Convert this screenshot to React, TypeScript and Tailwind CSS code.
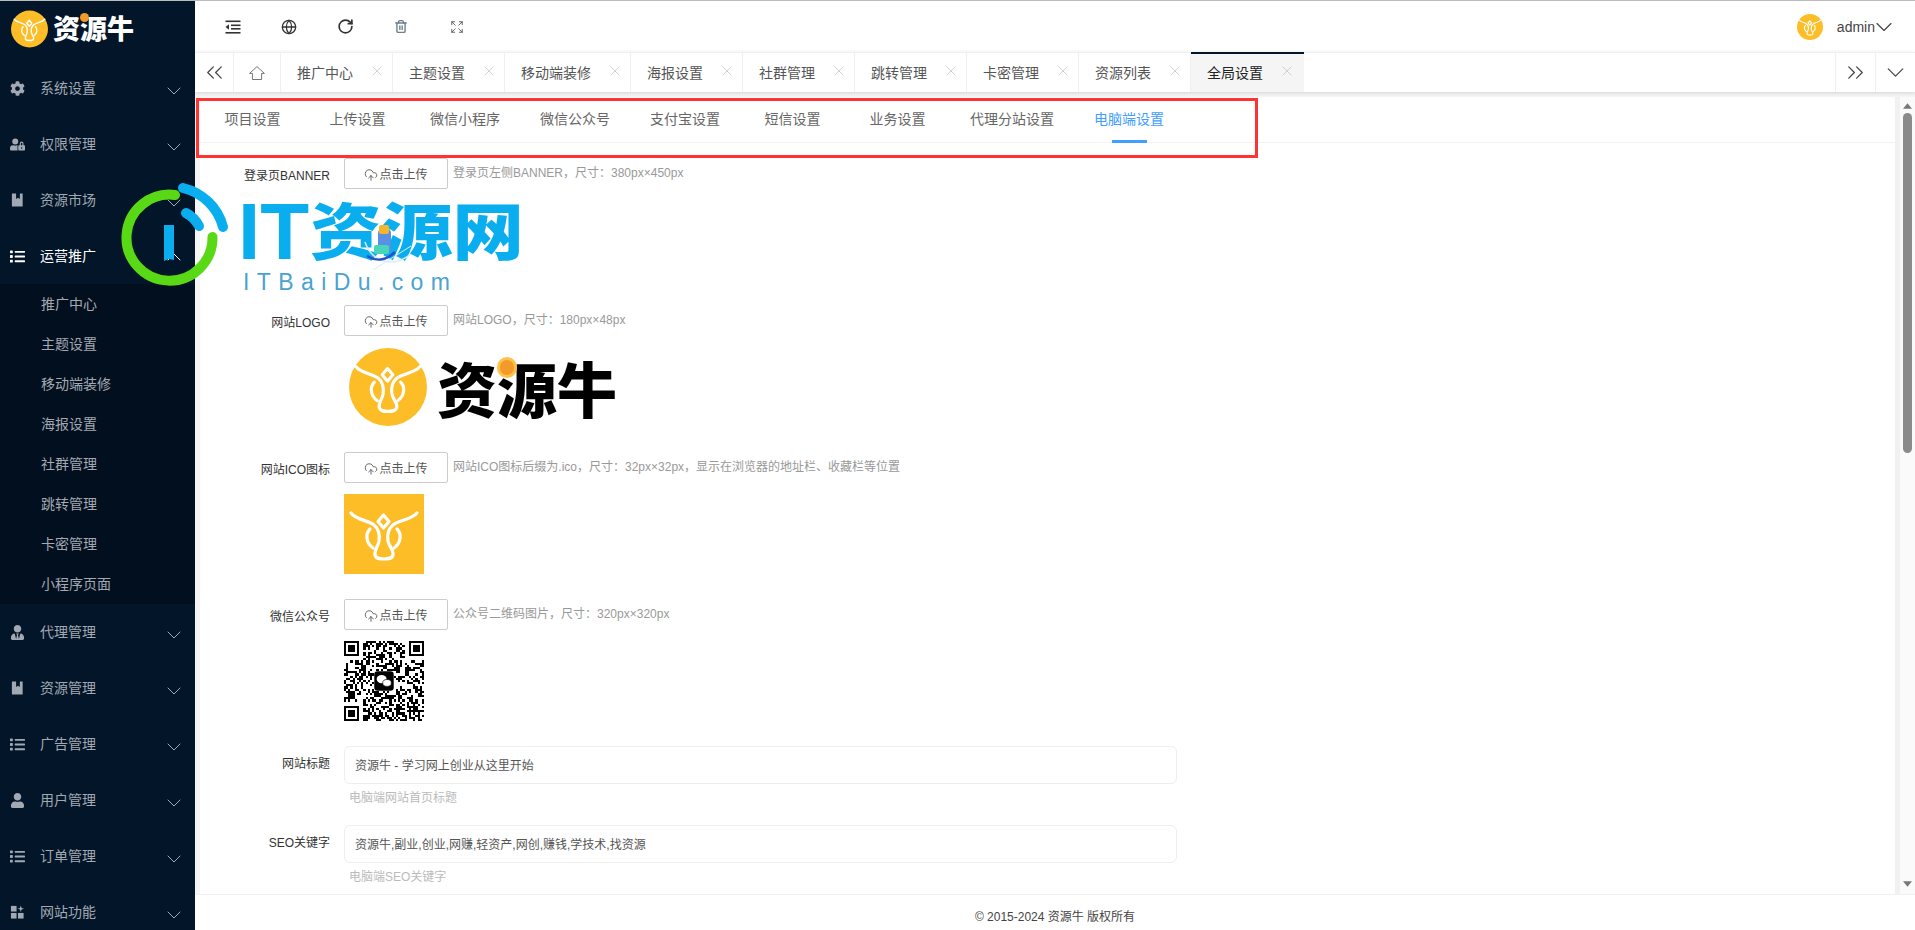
import React from "react";
import { ChevronDown, ChevronUp, ChevronsLeft, ChevronsRight, CloudUpload, Expand, Globe, RotateCw, Trash2, X } from "lucide-react";
import { FaCog, FaList, FaUser, FaUserLock, FaUserTie } from "react-icons/fa";

const FONT = '"Liberation Sans", "Noto Sans CJK SC", sans-serif';

function Bull({ stroke = "#fff", w = 2.4 }: { stroke?: string; w?: number }) {
  return (
    <g fill="none" stroke={stroke} strokeWidth={w} strokeLinecap="round" strokeLinejoin="round">
      <path d="M7 19C12 26 24 26 30 31C35 35 36 40 35 47C34 53 30 56 31 61C32 65 36 65 40 65C44 65 48 65 49 61C50 56 45 53 44 47C43 40 44 35 49 31C55 26 67 26 73 19" />
      <path d="M26 35C21 40 22 49 29 54" />
      <path d="M53 35C58 40 57 49 50 54" />
      <path d="M39.5 21L45 27.5L39.5 34L34 27.5Z" />
    </g>
  );
}

function BookIcon() {
  return (
    <svg viewBox="0 0 16 16" className="w-[15px] h-[16px]" fill="currentColor">
      <path d="M2 1H6.5V7L8.5 5.5L10.5 7V1H13.5V15H2Z" />
    </svg>
  );
}

function AppsIcon() {
  return (
    <svg viewBox="0 0 16 16" className="w-[15px] h-[16px]" fill="currentColor">
      <rect x="1" y="1.5" width="6" height="6" />
      <rect x="1" y="9" width="6" height="6" />
      <rect x="8.5" y="9" width="6" height="6" />
      <path d="M11.5 1L12.4 3.6L15 4.5L12.4 5.4L11.5 8L10.6 5.4L8 4.5L10.6 3.6Z" />
    </svg>
  );
}

function OutdentIcon() {
  return (
    <svg viewBox="0 0 16 16" className="w-[16px] h-[16px]" fill="#333">
      <rect x="0.5" y="1.5" width="15" height="1.6" />
      <rect x="6" y="5.5" width="9.5" height="1.6" />
      <rect x="6" y="9" width="9.5" height="1.6" />
      <rect x="0.5" y="13" width="15" height="1.6" />
      <path d="M4 5.2V10.8L0.5 8Z" />
    </svg>
  );
}

function HomeIcon() {
  return (
    <svg viewBox="0 0 16 14" className="w-[16px] h-[14px]" fill="none" stroke="#666" strokeWidth="0.9" strokeLinejoin="round">
      <path d="M0.6 7.4L8 0.6L15.4 7.4H12.6V13.5H3.4V7.4Z" />
    </svg>
  );
}

const ICON = "w-[15px] h-[15px]";

const topMenu = [
  { label: "系统设置", icon: <FaCog className={ICON} /> },
  { label: "权限管理", icon: <FaUserLock className={ICON} /> },
  { label: "资源市场", icon: <BookIcon /> },
];
const subMenu = ["推广中心", "主题设置", "移动端装修", "海报设置", "社群管理", "跳转管理", "卡密管理", "小程序页面"];
const bottomMenu = [
  { label: "代理管理", icon: <FaUserTie className={ICON} /> },
  { label: "资源管理", icon: <BookIcon /> },
  { label: "广告管理", icon: <FaList className={ICON} /> },
  { label: "用户管理", icon: <FaUser className={ICON} /> },
  { label: "订单管理", icon: <FaList className={ICON} /> },
  { label: "网站功能", icon: <AppsIcon /> },
];

function MenuItem({ label, icon, open }: { label: string; icon: React.ReactNode; open?: boolean }) {
  return (
    <div className={`flex items-center h-14 shrink-0 pl-[10px] pr-[9px] text-sm ${open ? "text-white" : "text-[#a3a9b2]"}`}>
      <span className="w-[15px] mr-[15px] flex justify-center">{icon}</span>
      <span>{label}</span>
      {open ? (
        <ChevronUp className="ml-auto w-[24px] h-[24px] mt-[2px] text-white" strokeWidth={1} />
      ) : (
        <ChevronDown className="ml-auto w-[24px] h-[24px] mt-[5px] text-[#a3a9b2]" strokeWidth={1} />
      )}
    </div>
  );
}

function Sidebar() {
  return (
    <aside className="w-[195px] shrink-0 bg-[#021529] flex flex-col overflow-hidden">
      <div className="h-[59px] shrink-0 flex items-center pl-[11px] pb-[4px]">
        <svg viewBox="0 0 80 80" className="w-[37px] h-[38px] shrink-0">
          <circle cx="40" cy="40" r="40" fill="#fdbd27" />
          <Bull w={3} />
        </svg>
        <div className="relative ml-[5px]">
          <span className="text-[27px] leading-[34px] font-black text-white whitespace-nowrap" style={{ fontFamily: '"Noto Sans CJK SC", sans-serif' }}>资源牛</span>
          <span className="absolute left-[27px] top-[2px] w-[9px] h-[9px] rounded-full bg-[#f39a2b]" />
        </div>
      </div>
      {topMenu.map((m) => (
        <MenuItem key={m.label} {...m} />
      ))}
      <MenuItem label="运营推广" icon={<FaList className={ICON} />} open />
      <div className="bg-[#020f1e] shrink-0">
        {subMenu.map((s) => (
          <div key={s} className="h-10 flex items-center pl-[41px] text-sm text-[#a3a9b2]">{s}</div>
        ))}
      </div>
      {bottomMenu.map((m) => (
        <MenuItem key={m.label} {...m} />
      ))}
    </aside>
  );
}

function Header() {
  return (
    <div className="h-[51px] shrink-0 flex items-center pl-[10px] pr-[17px] bg-white">
      <span className="w-14 flex justify-center"><OutdentIcon /></span>
      <span className="w-14 flex justify-center"><Globe className="w-[16px] h-[16px] text-[#333]" strokeWidth={1.9} /></span>
      <span className="w-14 flex justify-center"><RotateCw className="w-[17px] h-[17px] text-[#333]" strokeWidth={2.4} /></span>
      <span className="w-14 flex justify-center"><Trash2 className="w-[14px] h-[15px] text-[#6f7f8c]" strokeWidth={2.4} /></span>
      <span className="w-14 flex justify-center"><Expand className="w-[14px] h-[14px] text-[#555]" strokeWidth={1.5} /></span>
      <svg viewBox="0 0 80 80" className="ml-auto w-[26px] h-[26px]">
        <circle cx="40" cy="40" r="40" fill="#fdbd27" />
        <Bull w={3.4} />
      </svg>
      <span className="ml-[14px] text-sm text-[#444]">admin</span>
      <ChevronDown className="-ml-[5px] w-[28px] h-[28px] text-[#444]" strokeWidth={1} />
    </div>
  );
}

const tabs = ["推广中心", "主题设置", "移动端装修", "海报设置", "社群管理", "跳转管理", "卡密管理", "资源列表"];

function TabBar() {
  return (
    <div className="h-[40px] shrink-0 flex bg-white border-t border-[#f0f0f0] shadow-[0_1px_4px_rgba(0,0,0,0.14)] relative text-sm">
      <div className="w-[39px] flex items-center justify-center border-r border-[#f0f0f0]">
        <ChevronsLeft className="w-[27px] h-[27px] text-[#444]" strokeWidth={1.1} />
      </div>
      <div className="w-[47px] flex items-center justify-center border-r border-[#f0f0f0]">
        <HomeIcon />
      </div>
      {tabs.map((t) => (
        <div key={t} className="flex items-center pl-4 pr-[7px] border-r border-[#f0f0f0] text-[#555]">
          <span>{t}</span>
          <X className="ml-[16px] w-[16px] h-[16px] mb-[4px] text-[#bbb]" strokeWidth={1} />
        </div>
      ))}
      <div className="flex items-center pl-4 pr-[9px] bg-[#f5f5f5] border-t-2 border-[#021529] text-[#222] -mt-px">
        <span>全局设置</span>
        <X className="ml-[16px] w-[16px] h-[16px] mb-[4px] text-[#bbb]" strokeWidth={1} />
      </div>
      <div className="ml-auto w-[40px] flex items-center justify-center border-l border-[#f0f0f0]">
        <ChevronsRight className="w-[27px] h-[27px] text-[#444]" strokeWidth={1.1} />
      </div>
      <div className="w-[40px] flex items-center justify-center border-l border-[#f0f0f0]">
        <ChevronDown className="w-[29px] h-[29px] text-[#444]" strokeWidth={1} />
      </div>
    </div>
  );
}

const settings = ["项目设置", "上传设置", "微信小程序", "微信公众号", "支付宝设置", "短信设置", "业务设置", "代理分站设置", "电脑端设置"];

function Settings() {
  return (
    <div className="h-[46px] shrink-0 flex border-b border-[#f2f2f2] text-sm">
      {settings.map((s, i) => {
        const active = i === settings.length - 1;
        return (
          <div key={s} className={`relative min-w-[105px] px-5 pt-[13px] text-center leading-[18px] ${active ? "text-[#409eff]" : "text-[#666]"}`}>
            {s}
            {active && <span className="absolute left-[38px] bottom-[-1px] w-[35px] h-[3px] bg-[#409eff]" />}
          </div>
        );
      })}
    </div>
  );
}

function Label({ children }: { children: React.ReactNode }) {
  return <div className="w-[130px] mr-[14px] shrink-0 pt-[10px] text-right text-xs leading-4 text-[#333]">{children}</div>;
}

function UploadRow({ label, hint, children }: { label: string; hint: string; children?: React.ReactNode }) {
  return (
    <div className="flex mb-[25px]">
      <Label>{label}</Label>
      <div>
        <div className="flex items-start">
          <div className="w-[104px] h-[31px] border border-[#ccc] rounded-[2px] flex items-center justify-center pt-[2px] text-xs text-[#555]">
            <CloudUpload className="w-[14px] h-[14px] mr-[1px] text-[#555]" strokeWidth={1.5} />
            点击上传
          </div>
          <div className="ml-[5px] mt-[7px] text-xs leading-4 text-[#999] whitespace-nowrap">{hint}</div>
        </div>
        <div className="h-[80px] mt-[11px]">{children}</div>
      </div>
    </div>
  );
}

function InputRow({ label, value, hint }: { label: string; value: string; hint: string }) {
  return (
    <div className="flex mb-[19px]">
      <Label>{label}</Label>
      <div>
        <div className="w-[833px] h-[38px] border border-[#eee] rounded-[6px] flex items-center pl-[10px] pt-[2px] text-xs text-[#555]">{value}</div>
        <div className="mt-[6px] pl-[5px] text-xs leading-4 text-[#bbb]">{hint}</div>
      </div>
    </div>
  );
}

function BigLogo() {
  return (
    <div className="flex items-center h-[80px] pl-[5px]">
      <svg viewBox="0 0 80 80" className="w-[78px] h-[78px] shrink-0">
        <circle cx="40" cy="40" r="40" fill="#fdbd27" />
        <Bull w={3.2} />
      </svg>
      <div className="relative ml-[10px]">
        <span className="text-[60px] leading-[80px] font-black text-black whitespace-nowrap" style={{ fontFamily: '"Noto Sans CJK SC", sans-serif' }}>资源牛</span>
        <span className="absolute left-[60px] top-[10px] w-[20px] h-[21px] rounded-full bg-[#f39a2b] border-[3px] border-[#fbc34a]" />
      </div>
    </div>
  );
}

function IcoImage() {
  return (
    <svg viewBox="0 0 80 80" className="w-[80px] h-[80px]">
      <rect width="80" height="80" fill="#fdbd27" />
      <Bull w={3.2} />
    </svg>
  );
}

function qrPath() {
  const n = 37;
  let d = "";
  let s = 20240;
  const inFinder = (x: number, y: number) =>
    (x < 9 && y < 9) || (x > n - 10 && y < 9) || (x < 9 && y > n - 10);
  const inCentre = (x: number, y: number) => x > 13 && x < 23 && y > 13 && y < 23;
  for (let y = 0; y < n; y++) {
    for (let x = 0; x < n; x++) {
      s = (s * 1103515245 + 12345) & 0x7fffffff;
      if (inFinder(x, y) || inCentre(x, y)) continue;
      if ((s >> 16) % 2 === 0) d += `M${x} ${y}h1v1h-1z`;
    }
  }
  return d;
}

function Finder({ x, y }: { x: number; y: number }) {
  return (
    <g>
      <rect x={x} y={y} width="7" height="7" fill="#000" />
      <rect x={x + 1} y={y + 1} width="5" height="5" fill="#fff" />
      <rect x={x + 2} y={y + 2} width="3" height="3" fill="#000" />
    </g>
  );
}

function QrCode() {
  return (
    <svg viewBox="0 0 37 37" className="w-[80px] h-[80px]" shapeRendering="crispEdges">
      <path d={qrPath()} fill="#000" />
      <Finder x={0} y={0} />
      <Finder x={30} y={0} />
      <Finder x={0} y={30} />
      <g shapeRendering="auto">
        <rect x="14" y="14" width="9" height="9" rx="1.5" fill="#000" />
        <ellipse cx="17.4" cy="17.6" rx="2.3" ry="1.9" fill="#fff" />
        <ellipse cx="19.9" cy="19.4" rx="2" ry="1.6" fill="#fff" stroke="#000" strokeWidth="0.3" />
      </g>
    </svg>
  );
}

function Watermark() {
  return (
    <div className="absolute left-[115px] top-[180px] w-[420px] h-[115px] pointer-events-none">
      <svg viewBox="0 0 420 115" className="absolute inset-0 w-[420px] h-[115px]">
        <g fill="none" strokeLinecap="round" strokeWidth="10">
          <path d="M60 15A43 43 0 1 0 97.5 57" stroke="#59d916" />
          <path d="M68 8A54 54 0 0 1 108 47" stroke="#0aaeef" />
          <path d="M71 33A32 32 0 0 1 84 46" stroke="#0aaeef" strokeWidth="10" />
        </g>
        <path d="M49 45H59V80L54 79L49 81Z" fill="#0aaeef" />
      </svg>
      <div className="absolute left-[123px] top-[12px] flex items-center h-[80px] text-[#0aaeef] whitespace-nowrap">
        <span className="text-[80px] leading-[80px] font-bold" style={{ fontFamily: '"Liberation Sans", sans-serif' }}>IT</span>
        <span className="inline-block origin-left scale-x-[1.15] text-[62px] leading-[80px] font-black mb-[8px] ml-[1px]" style={{ fontFamily: '"Noto Sans CJK SC", sans-serif' }}>资源网</span>
      </div>
      <div className="absolute left-[128px] top-[89px] text-[23px] leading-[26px] text-[#4aa3cf] whitespace-nowrap tracking-[7.4px]" style={{ fontFamily: '"Liberation Sans", sans-serif' }}>ITBaiDu.com</div>
      <svg viewBox="0 0 420 115" className="absolute inset-0 w-[420px] h-[115px]">
        <path d="M250 62C256 80 276 90 296 74" fill="none" stroke="#d5ecfa" strokeWidth="1.5" />
        <path d="M258 90L296 66" fill="none" stroke="#d5ecfa" strokeWidth="1" />
        <rect x="263" y="48" width="13" height="26" rx="5" fill="#5b8fe6" />
        <rect x="264" y="45" width="10" height="9" rx="2" fill="#f6b52d" />
        <rect x="259" y="65" width="15" height="9" rx="2" fill="#48d6b8" />
        <path d="M252 76C262 82 272 80 280 72" fill="none" stroke="#2b4fc4" strokeWidth="2.5" />
      </svg>
    </div>
  );
}

function Scrollbar() {
  return (
    <div className="w-[20px] shrink-0 flex">
      <div className="w-[5px] shrink-0 bg-[#f1f1f1]" />
      <div className="flex-1 bg-[#fafafa] flex flex-col items-end pr-[3px] pt-[6px] pb-[6px]">
        <svg viewBox="0 0 10 6" className="w-[9px] h-[6px] shrink-0"><path d="M5 0L10 6H0Z" fill="#777" /></svg>
        <div className="w-[9px] h-[340px] mt-[4px] rounded-[5px] bg-[#8b8b8b] shrink-0" />
        <svg viewBox="0 0 10 6" className="w-[9px] h-[6px] mt-auto mb-[1px] shrink-0"><path d="M5 6L10 0H0Z" fill="#777" /></svg>
      </div>
    </div>
  );
}

export default function App() {
  return (
    <div className="relative w-[1915px] h-[930px] overflow-hidden bg-white flex flex-col" style={{ fontFamily: FONT }}>
      <div className="h-px shrink-0 bg-[#bbb]" />
      <div className="flex flex-1 min-h-0">
        <Sidebar />
        <div className="flex-1 min-w-0 flex flex-col">
          <Header />
          <TabBar />
          <div className="flex-1 min-h-0 flex bg-[#f5f5f5] pt-[5px] pl-[5px]">
            <div className="flex-1 min-w-0 bg-white rounded-t-[2px] flex flex-col overflow-hidden">
              <Settings />
              <div className="pt-[15px]">
                <UploadRow label="登录页BANNER" hint="登录页左侧BANNER，尺寸：380px×450px" />
                <UploadRow label="网站LOGO" hint="网站LOGO，尺寸：180px×48px"><BigLogo /></UploadRow>
                <UploadRow label="网站ICO图标" hint="网站ICO图标后缀为.ico，尺寸：32px×32px，显示在浏览器的地址栏、收藏栏等位置"><IcoImage /></UploadRow>
                <UploadRow label="微信公众号" hint="公众号二维码图片，尺寸：320px×320px"><QrCode /></UploadRow>
                <InputRow label="网站标题" value="资源牛 - 学习网上创业从这里开始" hint="电脑端网站首页标题" />
                <InputRow label="SEO关键字" value="资源牛,副业,创业,网赚,轻资产,网创,赚钱,学技术,找资源" hint="电脑端SEO关键字" />
              </div>
            </div>
            <Scrollbar />
          </div>
          <div className="h-[36px] shrink-0 bg-white border-t border-[#f0f0f0] pt-[14px] text-center text-xs leading-4 text-[#444]">© 2015-2024 资源牛 版权所有</div>
        </div>
      </div>
      <div className="absolute left-[196px] top-[98px] w-[1062px] h-[60px] border-[3px] border-[#f33] pointer-events-none" />
      <Watermark />
    </div>
  );
}
